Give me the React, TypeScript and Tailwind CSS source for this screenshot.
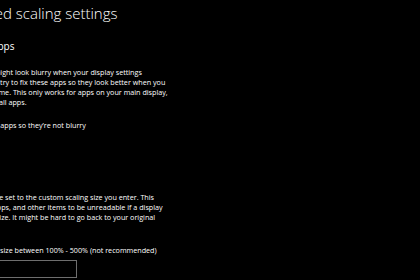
import React from 'react'

const body = "text-[7.2px] leading-[10.2px] whitespace-nowrap text-white"

export default function App() {
  return (
    <div className="h-[280px] w-[420px] overflow-hidden bg-black font-['Open_Sans','Noto_Sans',sans-serif] text-white">
      <div className="flex flex-col pt-[3.4px]">
        <h1 className="-ml-[54px] text-[15px] leading-[20px] font-light whitespace-nowrap">
          Advanced scaling settings
        </h1>
        <div className="-ml-[74px] flex flex-col">
          <h2 className="mt-[15.4px] text-[10px] leading-[14px] whitespace-nowrap">
            Fix scaling for apps
          </h2>
          <p className={`mt-[13.8px] ${body}`}>
            Some desktop apps might look blurry when your display settings
            <br />
            change. Windows can try to fix these apps so they look better when you
            <br />
            open them the next time. This only works for apps on your main display,
            <br />
            and this might not fix all apps.
          </p>
          <p className={`mt-[12.2px] ${body}`}>
            Let Windows try to fix apps so they’re not blurry
          </p>
          <div className="mt-[4px] flex h-[10px] items-center gap-[5px]">
            <span className="h-[10px] w-[22px] rounded-full border border-white" />
            <span className="text-[7px] leading-[10px]">Off</span>
          </div>
          <h2 className="mt-[20.3px] text-[10px] leading-[14px] whitespace-nowrap">
            Custom scaling
          </h2>
          <p className={`mt-[13.8px] ${body}`}>
            All your displays will be set to the custom scaling size you enter. This
            <br />
            may cause the text, apps, and other items to be unreadable if a display
            <br />
            doesn’t support that size. It might be hard to go back to your original
            <br />
            settings.
          </p>
          <p className={`mt-[12.2px] -ml-[3px] ${body}`}>
            Enter a custom scaling size between 100% - 500% (not recommended)
          </p>
          <input
            type="text"
            className="mt-[4.6px] h-[18px] w-[151px] border border-[#6e6e6e] bg-black px-[4px] text-[7px] text-white outline-none"
          />
        </div>
      </div>
    </div>
  )
}
